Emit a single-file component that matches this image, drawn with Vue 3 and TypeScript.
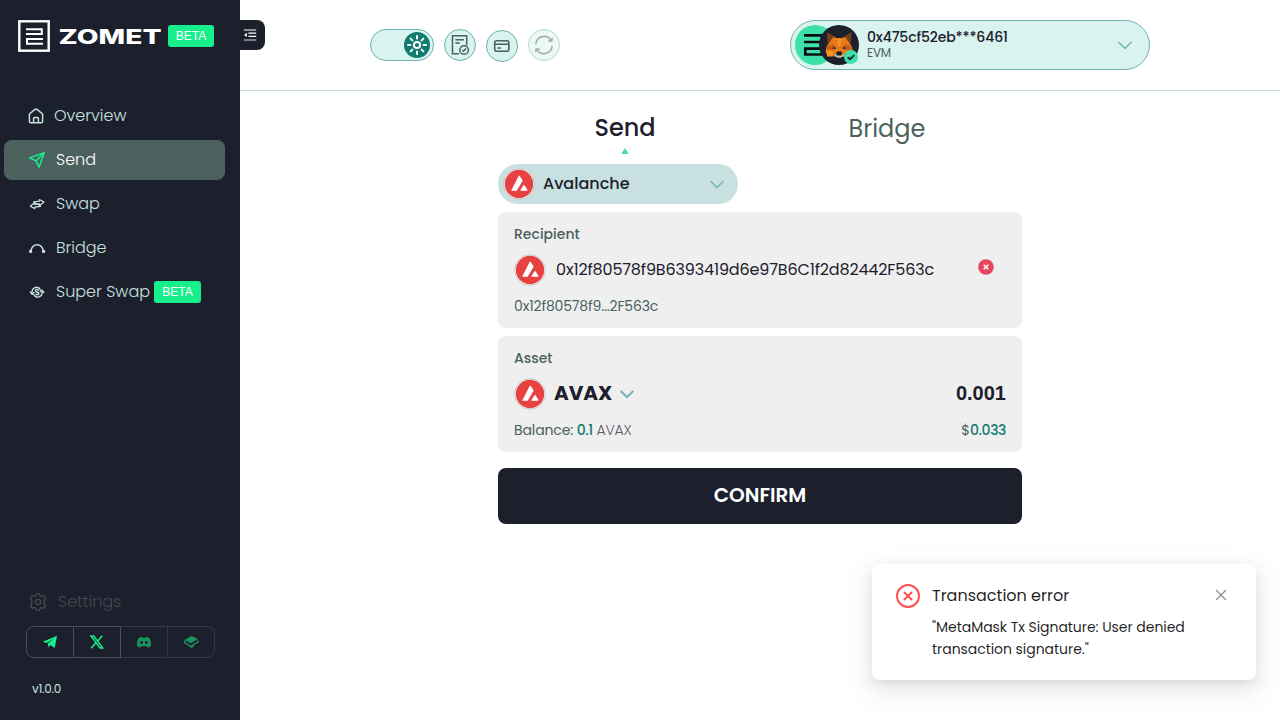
<script setup lang="ts">
interface NavItem {
  id: string
  label: string
  beta?: boolean
}

const navItems: NavItem[] = [
  { id: 'overview', label: 'Overview' },
  { id: 'send', label: 'Send' },
  { id: 'swap', label: 'Swap' },
  { id: 'bridge', label: 'Bridge' },
  { id: 'super', label: 'Super Swap', beta: true },
]
const active = 'send'
const rays: number[] = [0, 45, 90, 135, 180, 225, 270, 315]
</script>

<template>
  <div class="app">
    <aside class="sidebar">
      <div class="brand">
        <svg class="mark" width="32" height="32" viewBox="0 0 32 32" fill="none" stroke="#fff">
          <rect x="1.3" y="1.3" width="29.4" height="29.4" stroke-width="2.4" />
          <path d="M8 9.2h15.8v4.7H8M25 19H9v4.8h16" stroke-width="2" />
        </svg>
        <svg class="wordmark" width="108" height="24" viewBox="0 0 108 24">
          <text x="2.5" y="19.7" textLength="103" lengthAdjust="spacingAndGlyphs">ZOMET</text>
        </svg>
        <span class="beta">BETA</span>
      </div>

      <nav class="nav">
        <a v-for="item in navItems" :key="item.id" :class="['nav-item', item.id, { active: item.id === active }]">
          <svg v-if="item.id === 'overview'" class="nav-icon" width="16" height="16" viewBox="0 0 16 16" fill="none" stroke="currentColor" stroke-width="1.5">
            <path d="M1.4 6.6Q1.4 6 2 5.5L7 1.4q1-.7 2 0l5 4.1q.6.5.6 1.1v6.6q0 1.5-1.5 1.5H2.9q-1.5 0-1.5-1.5z" stroke-linejoin="round" />
            <path d="M5.6 14.5v-4q0-.9.9-.9h3q.9 0 .9.9v4" />
          </svg>
          <svg v-else-if="item.id === 'send'" class="nav-icon" width="18" height="18" viewBox="0 0 18 18" fill="none" stroke="#17ef8c" stroke-width="1.5" stroke-linejoin="round">
            <path d="M16.2 1.7 1.6 6.9 8 9.9 11 16.3z" />
            <path d="M16.2 1.7 8 9.9" />
          </svg>
          <svg v-else-if="item.id === 'swap'" class="nav-icon" width="18" height="18" viewBox="0 0 18 18" fill="none" stroke="currentColor" stroke-width="1.2" stroke-linejoin="round">
            <path d="M11.4 4.6v1.5L5.6 6.9l3.6 2.5 2.4-.5v1.6L16 7z" />
            <path d="M6.8 13.6v-1.5l5.8-.8L9 8.8l-2.4.5V7.7L2.2 11.2z" />
          </svg>
          <svg v-else-if="item.id === 'bridge'" class="nav-icon" width="18" height="18" viewBox="0 0 18 18" fill="none" stroke="currentColor" stroke-width="1.4">
            <path d="M2.8 12C3.7 7.9 6 5.7 9.1 5.7s5.4 2.2 6.3 6.3" />
            <circle cx="2.6" cy="12.4" r="1" fill="currentColor" />
            <circle cx="15.6" cy="12.4" r="1" fill="currentColor" />
          </svg>
          <svg v-else class="nav-icon" width="18" height="18" viewBox="0 0 18 18" fill="none" stroke="currentColor" stroke-width="1.4" stroke-linecap="round" stroke-linejoin="round">
            <path d="m2.3 9 1.9 2.2L6 9.6M15.9 9.4 14 7.2l-1.8 1.6" />
            <path d="M4.2 11C3 7.5 5.4 4.4 8.4 4.3c2 0 3.3 1.2 3.8 2.4" />
            <path d="M14 7.4c1.2 3.5-1.2 6.6-4.2 6.7-2 0-3.3-1.2-3.8-2.4" />
            <path d="M10.3 7.2C8.9 6 7.3 6.6 7.4 7.9c.2 1.5 3.2 1.2 3.4 2.6.1 1.3-1.5 1.9-2.9.7" />
          </svg>
          <span class="nav-label">{{ item.label }}</span>
          <span v-if="item.beta" class="beta">BETA</span>
        </a>
      </nav>

      <div class="side-bottom">
        <div class="settings">
          <svg width="20" height="20" viewBox="0 0 20 20" fill="none" stroke="currentColor" stroke-width="1.4" stroke-linejoin="round">
            <path d="M8.6 1.6h2.8q.6 2.9 2.4 2.6l2.2-.4 1.6 2.6q-2.2 2-1.2 3.6-1 1.6 1.2 3.6L16 16.2l-2.2-.4q-1.8-.3-2.4 2.6H8.6Q8 15.500 6.200 15.800l-2.200.4-1.600-2.600q2.200-2 1.200-3.600 1-1.600-1.200-3.600L4 3.800l2.200.4Q8 4.500 8.600 1.600z" />
            <circle cx="10" cy="10" r="2.6" />
          </svg>
          <span>Settings</span>
        </div>
        <div class="social">
          <a>
            <svg width="16" height="14" viewBox="0 0 16 14"><path fill="#17ef8c" d="M15 .8 12.700 13 8.500 10l-2 2.200L5.800 8.600l6-5.100-7.300 4.600L.8 6.800z" /></svg>
          </a>
          <a>
            <svg width="16" height="14" viewBox="0 0 16 14" fill="none" stroke="#17ef8c"><path d="M2 1h2.800l9 12H11z" stroke-width="1.400" /><path d="M13.200.7 8.700 6M6.800 8 2 13.300" stroke-width="1.500" /></svg>
          </a>
          <a class="dim">
            <svg width="16" height="14" viewBox="0 0 16 14"><path fill="#17ef8c" fill-rule="evenodd" d="M5.300 1.800 3 2.500C1.500 4.800.8 7.600 1 10.700c1.300 1.100 2.500 1.500 3.700 1.700l.8-1.400q2.500.6 5 0l.8 1.400c1.200-.2 2.400-.6 3.700-1.700.2-3.100-.5-5.900-2-8.200l-2.300-.7-.6 1Q8 2.400 5.900 2.800zM5.600 6a1.400 1.400 0 1 1 0 2.900 1.400 1.400 0 0 1 0-2.900m4.800 0a1.400 1.400 0 1 1 0 2.900 1.400 1.400 0 0 1 0-2.900" /></svg>
          </a>
          <a class="dim">
            <svg width="16" height="14" viewBox="0 0 16 14"><path fill="#17ef8c" d="M8.500.9 15 4 7.700 8.300 1.500 5.100z" /><path fill="none" stroke="#17ef8c" stroke-width="1.400" d="M1.500 5.200v2.400l6 3.700L15 7V5.200M7.400 12.600l3.400-1.700" /></svg>
          </a>
        </div>
        <div class="version">v1.0.0</div>
      </div>
    </aside>

    <div class="page">
      <header class="header">
        <button class="collapse">
          <svg width="14" height="14" viewBox="0 0 14 14"><path d="M.8 2h12.400M5.400 5.200h7.800M5.400 8.400h7.800" stroke="#fff" stroke-width="1.200" /><path d="M.8 12h12.400" stroke="#9a9ca4" stroke-width="1.500" /><path fill="#fff" d="M3.900 4.700v4.400L1 6.900z" /></svg>
        </button>
        <div class="tools">
          <div class="toggle">
            <svg width="26" height="26" viewBox="0 0 26 26">
              <circle cx="13" cy="13" r="13" fill="#107c70" />
              <circle cx="13" cy="13" r="3.100" fill="none" stroke="#fff" stroke-width="2" />
              <path v-for="r in rays" :key="r" d="M13 4v2.400" :transform="`rotate(${r} 13 13)`" stroke="#fff" stroke-width="2" stroke-linecap="round" />
            </svg>
          </div>
          <button class="tool">
            <svg width="20" height="22" viewBox="0 0 20 22" fill="none" stroke="#4a615e" stroke-width="1.500">
              <path d="M9 19.700H2.500V1.800h14.200v9.500M5.400 5.800h8.400M5.400 9.100h4.300" />
              <circle cx="14.100" cy="16" r="4.300" />
              <path d="m12.300 16 1.300 1.200 2.300-2.600" />
            </svg>
          </button>
          <button class="tool lower">
            <svg width="18" height="14" viewBox="0 0 18 14" fill="none" stroke="#4a615e" stroke-width="1.600"><rect x="1.700" y="1.700" width="14.200" height="10.600" rx="2" /><path d="M1.700 5.200h14.200M4.500 9h3.400" /></svg>
          </button>
          <button class="tool faded">
            <svg width="20" height="20" viewBox="0 0 20 20" fill="none" stroke="#4a615e" stroke-width="1.600"><path d="M1.900 9.300a8.200 8.200 0 0 1 15.400-3.600M18.100 10.700A8.200 8.200 0 0 1 2.700 14.300M18.400 2.800l-.7 3.400-3.500-.5M1.600 17.200l.7-3.400 3.500.5" /></svg>
          </button>
        </div>

        <div class="wallet">
          <svg class="avatars" width="66" height="42" viewBox="0 0 66 42">
            <circle cx="20" cy="21" r="20" fill="#3ee0a9" />
            <path d="M9 11.300h20M9 18h20M30 24.600H10.300v5.900H30" fill="none" stroke="#080c10" stroke-width="2.700" />
            <circle cx="44" cy="21" r="20" fill="#1c202c" />
            <path fill="#763e1a" d="m31.700 8.200 10 5.200-9 6zM56.700 8.200l-10 5.200 9 6z" />
            <path fill="#e87a18" d="m38.200 13.300 3.800.9h4.600l3.800-.9 6.200 8.800 1.200 4.800-2 5.700-5.600-1.500-2.200 1.900h-7.600l-2.200-1.900-5.600 1.500-2-5.700 1.200-4.800z" />
            <path fill="#f79323" d="m30.700 26.800 6.700-.3 1 5.900-5.800.2zM57.700 26.800l-6.700-.3-1 5.900 5.800.2zM42 14.200h4.600l-1 7.800H43z" />
            <path fill="#ca6016" d="m31.800 22 6.300-1.800 3.400 3-4.100 3.300-5.400-.5zM56.700 22l-6.300-1.800-3.400 3 4.100 3.300 5.400-.5z" />
            <path fill="#292c35" d="m36.500 24 3.500-1.100 1 2.200-2-.2zM51.900 24l-3.500-1.100-1 2.200 2-.2z" />
            <path fill="#c9bbb1" d="m38.300 31.300 4-1.200h3.800l4 1.200-4.300 2.400h-3.200z" />
            <path fill="#171c26" d="m41.300 28.600 1.200-1h3.400l1.200 1-.4 3h-5z" />
            <circle cx="56" cy="33" r="7" fill="#3ee0a9" />
            <path d="m52.700 33.100 2.300 2.200 4.300-4.200" fill="none" stroke="#1c202c" stroke-width="1.900" />
          </svg>
          <div class="wallet-text">
            <span class="address">0x475cf52eb***6461</span>
            <span class="network">EVM</span>
          </div>
          <svg class="wallet-chevron" width="14" height="9" viewBox="0 0 14 9" fill="none" stroke="#70b3b1" stroke-width="1.400"><path d="m.5 1 6.500 6.500L13.500 1" /></svg>
        </div>
      </header>

      <main class="content">
        <div class="tabs">
          <div class="tab current">
            <span>Send</span>
            <svg width="8" height="6" viewBox="0 0 8 6"><path fill="#3ee0a9" d="M4 0 .7 5.200q-.2.8.5.8h5.600q.7 0 .5-.8z" /></svg>
          </div>
          <div class="tab"><span>Bridge</span></div>
        </div>

        <div class="chain">
          <svg class="coin" width="32" height="32" viewBox="0 0 32 32"><circle cx="16" cy="16" r="15.300" fill="#fff" stroke="#b9bcbc" stroke-width=".8" /><circle cx="16" cy="16" r="14.200" fill="#e84142" /><path d="m16.200 8.400 2.900 4.100-5.800 9.700H9zM18.100 22.200l2.900-4.500 2.900 4.500z" fill="#fff" stroke="#fff" stroke-linejoin="round" stroke-width="1.200" /></svg>
          <span class="chain-name">Avalanche</span>
          <svg width="14" height="9" viewBox="0 0 14 9" fill="none" stroke="#70b3b1" stroke-width="1.300"><path d="m.5 1 6.500 6.500L13.500 1" /></svg>
        </div>

        <section class="card">
          <span class="card-title">Recipient</span>
          <div class="card-row">
            <svg class="coin" width="32" height="32" viewBox="0 0 32 32"><circle cx="16" cy="16" r="15.300" fill="#fff" stroke="#b9bcbc" stroke-width=".8" /><circle cx="16" cy="16" r="14.200" fill="#e84142" /><path d="m16.200 8.400 2.900 4.100-5.800 9.700H9zM18.100 22.200l2.900-4.500 2.900 4.500z" fill="#fff" stroke="#fff" stroke-linejoin="round" stroke-width="1.200" /></svg>
            <span class="recipient">0x12f80578f9B6393419d6e97B6C1f2d82442F563c</span>
            <svg class="clear" width="16" height="16" viewBox="0 0 16 16"><circle cx="8" cy="8" r="7.800" fill="#ea4560" /><path d="m5.700 5.700 4.600 4.600m0-4.600-4.600 4.600" stroke="#fff" stroke-width="1.500" /></svg>
          </div>
          <span class="short">0x12f80578f9...2F563c</span>
        </section>

        <section class="card">
          <span class="card-title">Asset</span>
          <div class="card-row">
            <svg class="coin" width="32" height="32" viewBox="0 0 32 32"><circle cx="16" cy="16" r="15.300" fill="#fff" stroke="#b9bcbc" stroke-width=".8" /><circle cx="16" cy="16" r="14.200" fill="#e84142" /><path d="m16.200 8.400 2.900 4.100-5.800 9.700H9zM18.100 22.200l2.900-4.500 2.900 4.500z" fill="#fff" stroke="#fff" stroke-linejoin="round" stroke-width="1.200" /></svg>
            <span class="symbol">AVAX</span>
            <svg class="asset-chevron" width="14" height="9" viewBox="0 0 14 9" fill="none" stroke="#70b3b1" stroke-width="2"><path d="m.7 1 6.300 6.200L13.300 1" /></svg>
            <span class="amount">0.001</span>
          </div>
          <div class="card-foot">
            <span class="balance">Balance: <b>0.1</b> <i>AVAX</i></span>
            <span class="usd">$<b>0.033</b></span>
          </div>
        </section>

        <button class="confirm">CONFIRM</button>
      </main>
    </div>

    <div class="notice">
      <svg class="notice-icon" width="24" height="24" viewBox="0 0 24 24" fill="none" stroke="#ff4d4f" stroke-width="1.900"><circle cx="12" cy="12" r="11" /><path d="m8 8 8 8m0-8-8 8" /></svg>
      <div class="notice-body">
        <div class="notice-title">Transaction error</div>
        <div class="notice-text">"MetaMask Tx Signature: User denied transaction signature."</div>
      </div>
      <svg class="notice-close" width="12" height="12" viewBox="0 0 12 12" stroke="#8c8c8c" stroke-width="1.200"><path d="m1 1 10 10M11 1 1 11" /></svg>
    </div>
  </div>
</template>

<style>
body {
  margin: 0;
  overflow: hidden;
}
</style>

<style scoped>
.app {
  display: flex;
  width: 1280px;
  height: 720px;
  overflow: hidden;
  background: #fff;
  color: #1c202c;
  font-family: Poppins, Inter, "Liberation Sans", sans-serif;
}
.app * {
  box-sizing: border-box;
}
svg {
  display: block;
  flex: none;
}
span {
  white-space: nowrap;
}
button {
  border: 0;
  padding: 0;
  font-family: inherit;
}
.sidebar {
  display: flex;
  flex-direction: column;
  flex: none;
  width: 240px;
  background: #1c202c;
}
.brand {
  display: flex;
  align-items: center;
  height: 72px;
  padding-left: 18px;
}
.wordmark {
  margin-left: 6px;
}
.wordmark text {
  font: 800 20.5px Inter, "Liberation Sans", sans-serif;
  fill: #fff;
}
.beta {
  width: 46px;
  height: 22px;
  border-radius: 3px;
  background: #17ef8c;
  color: #fff;
  font: 12px/22px "Liberation Sans", Arial, sans-serif;
  text-align: center;
}
.brand .beta {
  margin-left: 4px;
}
.nav {
  display: flex;
  flex-direction: column;
  gap: 4px;
  padding: 24px 15px 0 4px;
}
.nav-item {
  display: flex;
  align-items: center;
  height: 40px;
  padding-left: 24px;
  border-radius: 8px;
  color: #c8e0e0;
  font-size: 16px;
  font-weight: 300;
}
.nav-label {
  margin: -2px 0 0 10px;
}
.nav-item.active {
  background: #4a615e;
  color: #fff;
}
.nav-item .beta {
  width: 47px;
  margin-left: 4px;
}
.side-bottom {
  margin-top: auto;
  padding: 0 25px 24px 26px;
}
.settings {
  display: flex;
  align-items: center;
  gap: 10px;
  height: 24px;
  padding-left: 2px;
  color: #444851;
  font-size: 16px;
  font-weight: 300;
}
.settings span {
  margin-top: -2px;
}
.social {
  display: grid;
  grid-template-columns: 48px 47px 47px 47px;
  height: 32px;
  margin-top: 12px;
}
.social a {
  display: grid;
  place-items: center;
  border: 1px solid #4b4e58;
  border-left-width: 0;
}
.social a:first-child {
  border-left-width: 1px;
  border-radius: 8px 0 0 8px;
}
.social a:last-child {
  border-radius: 0 8px 8px 0;
}
.social .dim {
  border-color: #343842;
}
.social .dim svg {
  opacity: 0.55;
}
.version {
  height: 14px;
  margin: 24px 0 0 6px;
  color: #c8e0e0;
  font-size: 12px;
  letter-spacing: -0.3px;
  line-height: 14px;
}
.page {
  width: 1040px;
}
.header {
  display: flex;
  align-items: flex-start;
  height: 91px;
  padding-top: 20px;
  border-bottom: 1px solid #c8e0e0;
}
.collapse {
  display: grid;
  align-items: center;
  width: 25px;
  height: 30px;
  padding-left: 3px;
  border-radius: 0 8px 8px 0;
  background: #1c202c;
}
.tools {
  display: flex;
  gap: 10px;
  margin: 9px 0 0 105px;
}
.toggle {
  display: flex;
  align-items: center;
  justify-content: flex-end;
  width: 64px;
  height: 32px;
  padding-right: 3px;
  border: 1px solid #70b3b1;
  border-radius: 16px;
  background: #d9f3ef;
}
.tool {
  display: grid;
  place-items: center;
  width: 32px;
  height: 32px;
  border: 1px solid #70b3b1;
  border-radius: 50%;
  background: #d9f3ef;
}
.tool.lower {
  margin-top: 1px;
}
.faded {
  opacity: 0.5;
}
.wallet {
  display: flex;
  align-items: center;
  width: 360px;
  height: 50px;
  margin-left: 230px;
  padding: 0 17px 0 4px;
  border: 1px solid #70b3b1;
  border-radius: 25px;
  background: #d9f3ef;
}
.wallet-text {
  display: flex;
  flex-direction: column;
  margin-left: 6px;
}
.address {
  font-size: 14px;
  font-weight: 500;
  letter-spacing: -0.13px;
  line-height: 16px;
}
.network {
  color: #4a615e;
  font-size: 12px;
  letter-spacing: -0.2px;
  line-height: 16px;
}
.wallet-chevron {
  margin-left: auto;
}
.content {
  display: flex;
  flex-direction: column;
  width: 524px;
  margin-left: 258px;
}
.tabs {
  display: grid;
  grid-template-columns: 1fr 1fr;
  width: 524px;
  height: 73px;
  margin-left: -4px;
}
.tab {
  display: flex;
  flex-direction: column;
  align-items: center;
  padding-top: 20px;
  color: #4a615e;
  font-size: 24px;
  line-height: 36px;
}
.tab.current {
  padding-top: 19px;
  color: #1c202c;
  font-weight: 500;
}
.tab svg {
  margin-top: 2px;
}
.chain {
  display: flex;
  align-items: center;
  width: 240px;
  height: 40px;
  padding: 0 14px 0 5px;
  border-radius: 20px;
  background: #c8e0e0;
}
.chain-name {
  margin: -2px auto 0 8px;
  font-size: 16px;
  font-weight: 500;
}
.card {
  height: 116px;
  margin-top: 8px;
  padding: 12px 16px;
  border-radius: 8px;
  background: #efefef;
  color: #4a615e;
  font-size: 14px;
  line-height: 20px;
}
.card-title {
  display: block;
  font-weight: 500;
}
.card-row {
  display: flex;
  align-items: center;
  height: 32px;
  margin: 10px 0;
  color: #1c202c;
}
.recipient {
  margin-left: 10px;
  font-size: 16px;
  letter-spacing: -0.15px;
}
.clear {
  margin: -6px 12px 0 auto;
}
.short {
  display: block;
  letter-spacing: -0.15px;
}
.symbol {
  margin: -2px 0 0 8px;
  font-size: 20px;
  font-weight: 700;
}
.asset-chevron {
  margin-left: 8px;
}
.amount {
  margin: -2px 0 0 auto;
  font: 700 20px "Liberation Sans", Arial, sans-serif;
}
.card-foot {
  display: flex;
  justify-content: space-between;
}
.balance {
  letter-spacing: -0.12px;
}
.card-foot b {
  color: #107c70;
  font-weight: 500;
  letter-spacing: -0.4px;
}
.card-foot i {
  color: #555a65;
  font-style: normal;
  font-weight: 300;
}
.confirm {
  height: 56px;
  margin-top: 16px;
  padding-bottom: 2px;
  border-radius: 8px;
  background: #1c202c;
  color: #fff;
  font-size: 20px;
  font-weight: 600;
}
.notice {
  position: absolute;
  top: 564px;
  left: 872px;
  display: flex;
  width: 384px;
  height: 116px;
  padding: 20px 24px;
  border-radius: 8px;
  background: #fff;
  box-shadow: 0 6px 16px 0 rgba(0, 0, 0, 0.08), 0 3px 6px -4px rgba(0, 0, 0, 0.12), 0 9px 28px 8px rgba(0, 0, 0, 0.05);
  color: rgba(0, 0, 0, 0.88);
}
.notice-body {
  width: 262px;
  margin-left: 12px;
}
.notice-title {
  font-size: 16px;
  line-height: 24px;
}
.notice-text {
  margin-top: 8px;
  font-size: 14px;
  letter-spacing: -0.05px;
  line-height: 22px;
}
.notice-close {
  margin: 5px 5px 0 auto;
}
</style>
